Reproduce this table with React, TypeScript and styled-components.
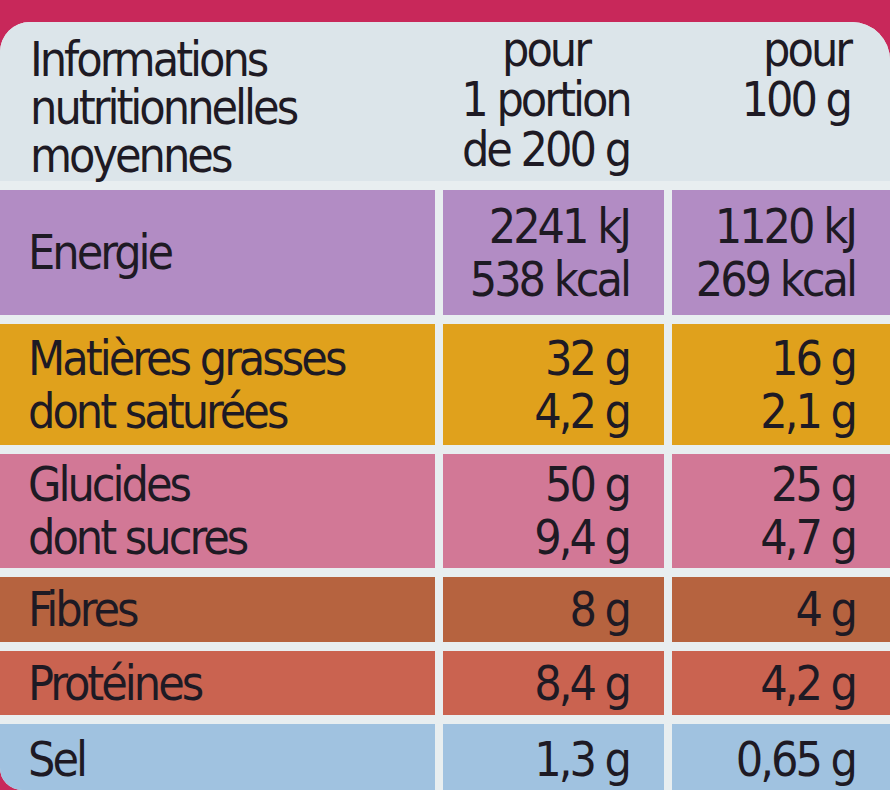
import React from "react";
import styled, { createGlobalStyle } from "styled-components";

const Global = createGlobalStyle`
  html, body { margin: 0; padding: 0; }
  body {
    background: #c8285a;
    font-family: "DejaVu Sans Condensed", "DejaVu Sans", "Liberation Sans", sans-serif;
    font-stretch: condensed;
    color: #1e1a24;
  }
`;

const Page = styled.div`
  width: 890px;
  height: 790px;
  overflow: hidden;
  padding-top: 22px;
  box-sizing: border-box;
`;

const Card = styled.div`
  height: 768px;
  background: #e8eef0;
  border-radius: 30px 38px 0 22px;
  overflow: hidden;
  display: flex;
  flex-direction: column;
  gap: 9px;
`;

const Row = styled.div<{ $h: number }>`
  display: grid;
  grid-template-columns: 435px 221px 1fr;
  column-gap: 8px;
  height: ${(p) => p.$h}px;
  flex: none;
`;

const HeaderRow = styled(Row)`
  background: #dce5ea;
  column-gap: 0;
`;

const Text = `
  font-size: 48px;
  letter-spacing: -3px;
`;

const HeadLabel = styled.div`
  ${Text}
  padding: 13px 0 0 30px;
  line-height: 48px;
`;

const HeadCol = styled.div<{ $align: "center" | "right" }>`
  ${Text}
  padding: 2px ${(p) => (p.$align === "right" ? "40px" : "0")} 0 0;
  text-align: ${(p) => p.$align};
  line-height: 50px;
`;

const Cell = styled.div<{ $bg: string; $right?: boolean }>`
  ${Text}
  background: ${(p) => p.$bg};
  display: flex;
  flex-direction: column;
  justify-content: center;
  align-items: ${(p) => (p.$right ? "flex-end" : "flex-start")};
  padding: ${(p) => (p.$right ? "0 35px 0 0" : "0 0 0 28px")};
  line-height: 53px;
  white-space: nowrap;
`;

type Nut = { label: string[]; a: string[]; b: string[]; bg: string; h: number };

const rows: Nut[] = [
  { label: ["Energie"], a: ["2241 kJ", "538 kcal"], b: ["1120 kJ", "269 kcal"], bg: "#b28cc4", h: 125 },
  { label: ["Matières grasses", "dont saturées"], a: ["32 g", "4,2 g"], b: ["16 g", "2,1 g"], bg: "#e0a11c", h: 121 },
  { label: ["Glucides", "dont sucres"], a: ["50 g", "9,4 g"], b: ["25 g", "4,7 g"], bg: "#d27896", h: 114 },
  { label: ["Fibres"], a: ["8 g"], b: ["4 g"], bg: "#b6633f", h: 65 },
  { label: ["Protéines"], a: ["8,4 g"], b: ["4,2 g"], bg: "#ca6350", h: 64 },
  { label: ["Sel"], a: ["1,3 g"], b: ["0,65 g"], bg: "#a0c2e0", h: 70 },
];

const Lines = ({ items }: { items: string[] }) => (
  <>
    {items.map((t) => (
      <span key={t}>{t}</span>
    ))}
  </>
);

export default function App() {
  return (
    <>
      <Global />
      <Page>
        <Card>
          <HeaderRow $h={159}>
            <HeadLabel>
              Informations
              <br />
              nutritionnelles
              <br />
              moyennes
            </HeadLabel>
            <HeadCol $align="center">
              pour
              <br />1 portion
              <br />
              de 200 g
            </HeadCol>
            <HeadCol $align="right">
              pour
              <br />
              100 g
            </HeadCol>
          </HeaderRow>
          {rows.map((r) => (
            <Row key={r.label[0]} $h={r.h}>
              <Cell $bg={r.bg}>
                <Lines items={r.label} />
              </Cell>
              <Cell $bg={r.bg} $right>
                <Lines items={r.a} />
              </Cell>
              <Cell $bg={r.bg} $right>
                <Lines items={r.b} />
              </Cell>
            </Row>
          ))}
        </Card>
      </Page>
    </>
  );
}
